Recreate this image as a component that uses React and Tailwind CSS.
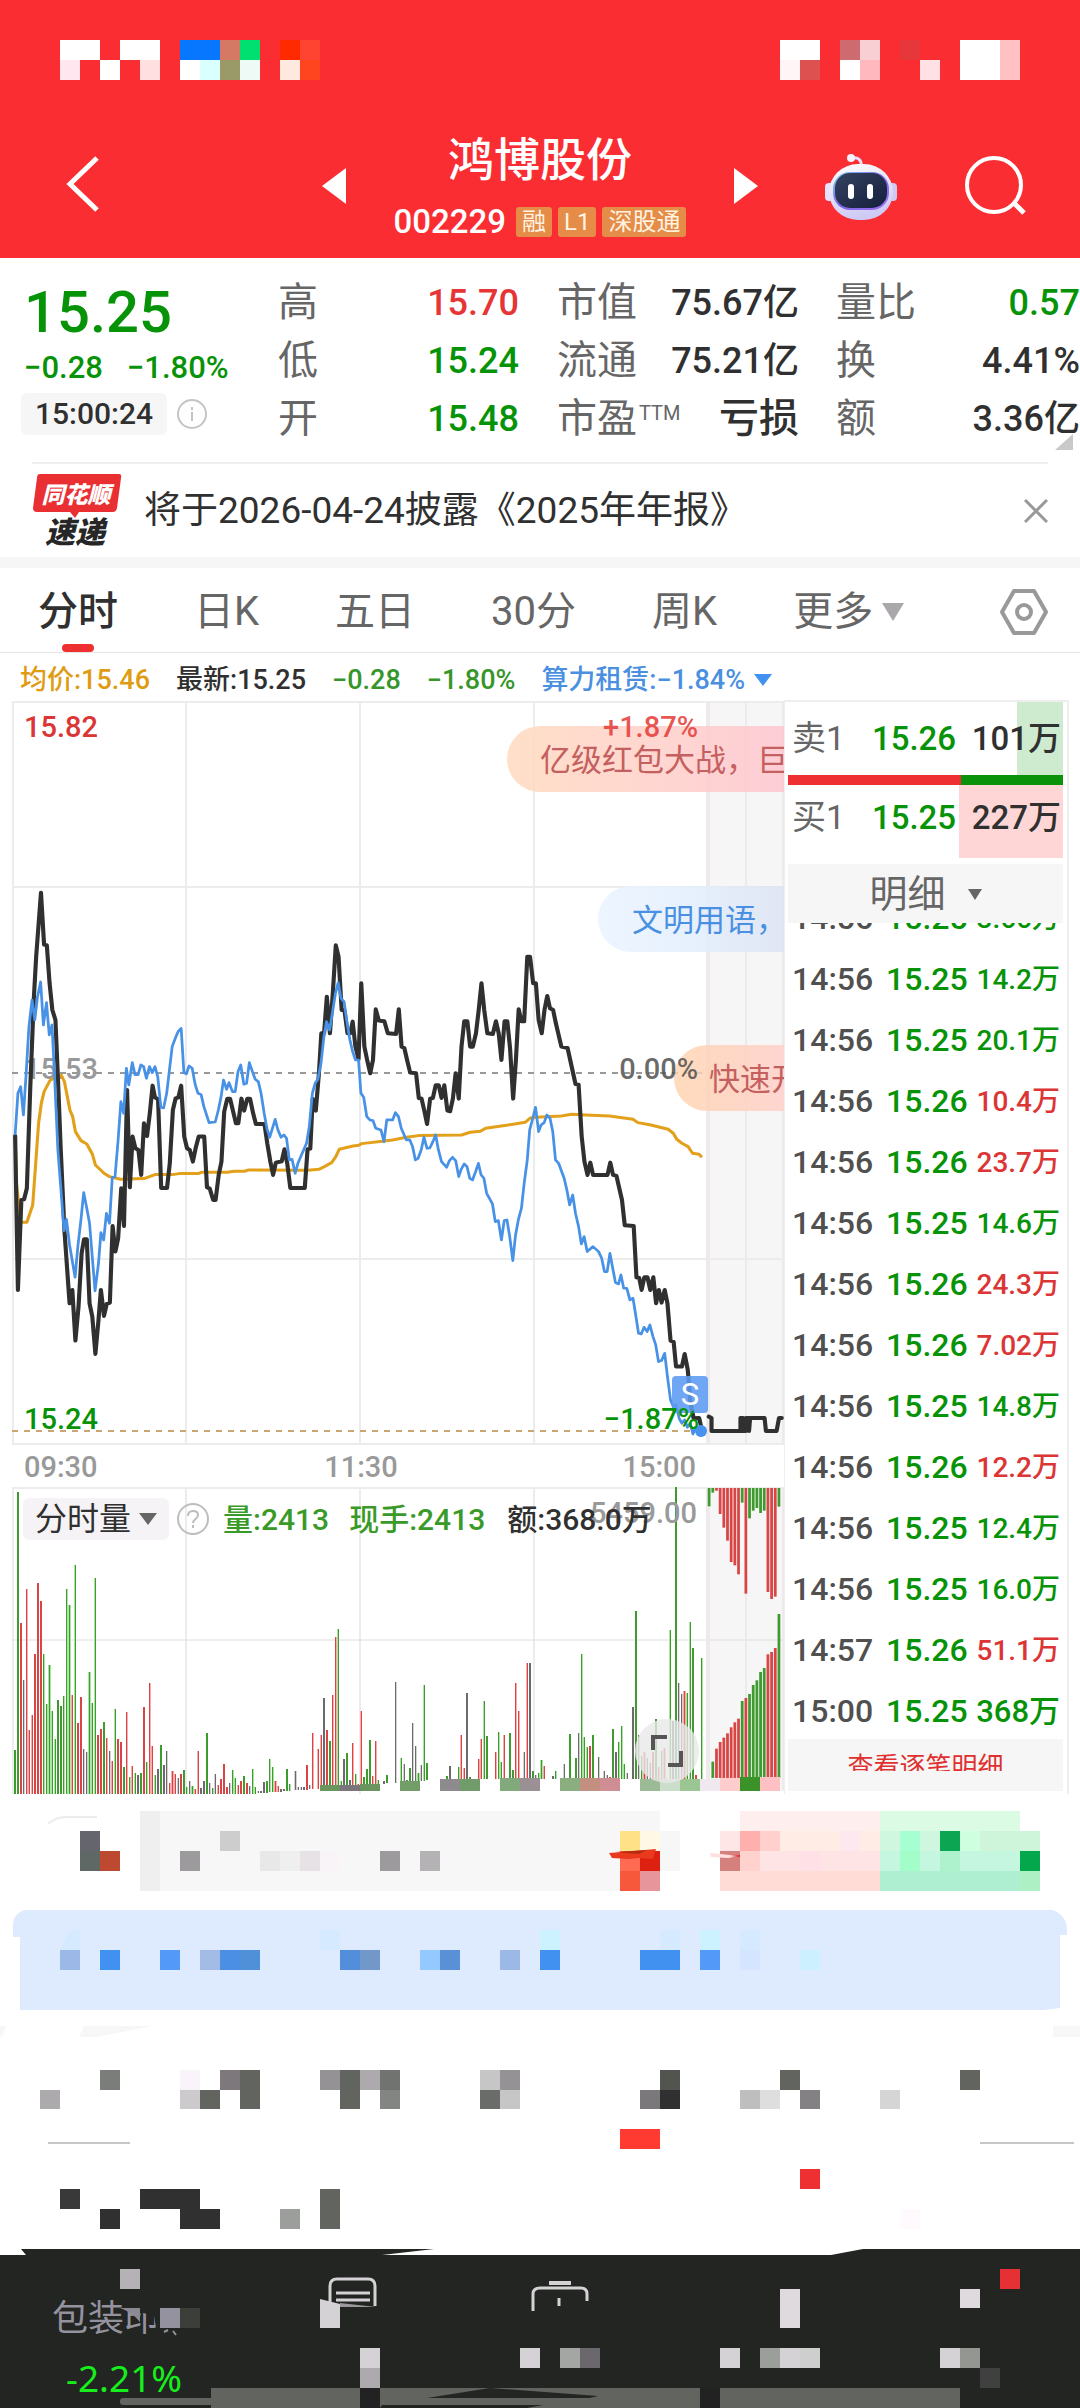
import React from "react";

const GREEN = "#079307";
const RED = "#dc3535";

const PRICE =
  "44,1338 52,1800 62,1530 70,1528 78,1495 88,1190 98,930 105,800 119,608 128,764 136,766 144,880 152,960 161,990 170,1210 176,1370 187,1620 202,1840 210,1800 219,1952 228,1850 237,1690 244,1648 252,1648 260,1840 268,1880 277,1992 286,1890 293,1800 302,1878 310,1842 319,1838 327,1608 335,1685 343,1645 352,1495 360,1608 369,1200 377,1492 385,1340 393,1375 402,1380 410,1455 418,1300 427,1338 435,1270 443,1187 450,1222 459,1228 468,1494 485,1494 493,1420 502,1260 510,1225 518,1222 526,1187 535,1340 543,1375 551,1380 560,1415 568,1375 577,1340 593,1340 601,1492 609,1496 619,1530 626,1530 635,1455 643,1415 651,1265 660,1226 668,1226 677,1265 685,1300 692,1300 701,1226 709,1262 718,1226 726,1226 735,1270 743,1302 768,1302 776,1360 785,1415 793,1455 801,1418 818,1414 826,1378 834,1420 843,1494 885,1494 893,1378 901,1376 908,1226 917,1262 926,1150 933,1030 941,1030 949,920 958,1030 967,900 975,766 983,800 992,960 1000,960 1009,1030 1017,1030 1024,995 1032,1070 1041,1108 1049,880 1058,1070 1066,1110 1075,1150 1083,1110 1091,958 1100,992 1116,994 1126,1030 1150,1032 1158,958 1166,1070 1174,1074 1182,1110 1191,1148 1208,1150 1216,1224 1224,1226 1232,1262 1240,1302 1249,1226 1257,1224 1265,1186 1274,1186 1282,1224 1290,1186 1299,1262 1307,1264 1315,1226 1323,1150 1332,1226 1340,1070 1348,994 1357,994 1365,1070 1373,1070 1382,1030 1390,960 1398,880 1406,960 1415,1030 1431,1032 1440,994 1448,1030 1456,1110 1465,994 1473,994 1481,1075 1490,1226 1498,1110 1506,958 1514,994 1522,994 1531,800 1539,800 1548,880 1556,880 1564,990 1573,1030 1581,960 1589,918 1597,955 1606,960 1614,1000 1630,1070 1648,1074 1671,1182 1680,1184 1689,1340 1697,1415 1706,1455 1714,1418 1722,1455 1764,1455 1772,1418 1780,1455 1790,1458 1806,1530 1814,1606 1840,1608 1848,1762 1856,1764 1863,1800 1871,1762 1880,1762 1888,1800 1897,1762 1905,1840 1913,1800 1921,1838 1930,1800 1938,1840 1947,1952 1956,1956 1963,2030 1980,2030 1988,1992 1997,2040 2005,2140 2014,2185 2030,2184 2039,2225";

const AUCTION =
  "2058,2180 2066,2184 2066,2223 2150,2223 2150,2184 2158,2184 2158,2223 2166,2223 2166,2184 2175,2184 2175,2223 2178,2184 2220,2184 2224,2223 2255,2223 2262,2184 2270,2184";

const SECTOR =
  "44,1335 52,1210 60,1190 68,1275 76,1150 84,1010 93,930 101,990 109,920 118,876 126,1005 135,938 143,1035 151,1005 158,1150 168,1380 177,1500 186,1622 193,1588 202,1665 218,1762 226,1670 235,1590 243,1508 252,1555 260,1600 276,1803 286,1720 293,1628 301,1650 309,1570 318,1600 326,1462 334,1460 343,1350 351,1235 359,1270 367,1135 374,1185 384,1118 392,1154 401,1154 409,1125 417,1130 425,1165 434,1130 442,1148 450,1130 458,1160 467,1252 475,1254 484,1210 492,1140 500,1070 509,1045 517,1025 526,1015 534,1148 541,1152 549,1128 558,1135 567,1185 575,1210 584,1214 592,1250 607,1298 625,1296 634,1260 642,1220 649,1170 658,1198 665,1178 675,1205 683,1205 691,1145 699,1125 708,1183 716,1180 724,1118 733,1145 741,1168 750,1175 758,1210 767,1270 775,1315 783,1342 799,1288 807,1320 816,1342 824,1335 832,1345 840,1410 848,1408 857,1450 865,1420 890,1360 898,1310 907,1210 915,1180 923,1168 932,1120 940,1045 948,995 957,1020 965,970 974,910 982,878 990,925 999,935 1008,1000 1016,1050 1024,1085 1032,1110 1041,1110 1048,1210 1056,1222 1065,1280 1074,1290 1083,1292 1091,1315 1106,1320 1115,1355 1123,1290 1140,1290 1148,1268 1157,1280 1165,1315 1180,1350 1190,1350 1198,1370 1206,1410 1214,1405 1223,1380 1231,1342 1240,1375 1248,1374 1257,1355 1265,1335 1273,1380 1282,1415 1297,1432 1305,1412 1314,1402 1323,1412 1332,1460 1339,1438 1348,1422 1356,1430 1364,1465 1372,1470 1381,1445 1389,1420 1397,1455 1405,1465 1413,1510 1430,1542 1438,1595 1447,1592 1456,1650 1464,1592 1472,1590 1480,1640 1489,1712 1497,1635 1505,1590 1514,1555 1522,1480 1531,1410 1538,1320 1547,1285 1555,1252 1564,1325 1571,1305 1580,1298 1588,1275 1597,1285 1605,1325 1613,1410 1622,1420 1638,1465 1646,1500 1654,1545 1663,1515 1671,1570 1680,1610 1688,1662 1696,1640 1705,1685 1722,1670 1738,1685 1747,1705 1755,1745 1763,1745 1771,1690 1787,1778 1796,1782 1803,1755 1811,1795 1820,1795 1829,1830 1838,1825 1845,1870 1854,1930 1862,1932 1870,1912 1879,1925 1887,1905 1896,1940 1904,1965 1912,2015 1921,2012 1930,1990 1938,2060 1947,2130 1955,2150 1963,2145 1972,2185 1980,2200 1988,2190 1996,2212 2004,2200 2012,2232 2020,2212 2036,2240";

const AVERAGE =
  "44,1338 48,1480 60,1597 78,1597 95,1545 103,1430 112,1300 120,1240 128,1205 145,1172 165,1158 178,1156 187,1175 203,1260 211,1280 219,1325 235,1352 252,1362 268,1392 277,1425 302,1450 318,1460 350,1468 418,1466 450,1454 500,1454 520,1451 575,1451 585,1447 660,1447 680,1444 710,1444 722,1440 895,1441 926,1438 942,1430 963,1418 975,1400 985,1378 1025,1368 1042,1366 1050,1361 1110,1354 1140,1350 1180,1342 1215,1337 1340,1335 1365,1327 1395,1324 1410,1315 1490,1303 1525,1297 1540,1284 1568,1281 1630,1278 1660,1273 1700,1275 1770,1278 1838,1288 1852,1298 1890,1305 1940,1318 1955,1330 1965,1348 1980,1360 1998,1370 2011,1390 2030,1393 2038,1402";

/* One entry per minute: colour key followed by the bar's top; "-" is an empty minute. */
const VOLUME = (
  "g960 g187 r580 k750 r477 r900 r855 r673 r460 r514 g672 g822 g705 g843 g927 g810 g827 g798 g477 g526 r796 g405 r879 r801 k957 k965 g727 g819 g445 r915 r898 g875 r924 k964 r992 g838 r926 r935 g1010 r847 " +
  "g1040 r1007 g1030 k1035 g1030 r830 g995 r760 r948 g1035 k1018 g945 k1005 k964 r1060 r1022 r1033 k1043 r1032 g1020 g1072 k1052 g1067 r1077 r963 k1075 k1052 g909 k1060 g1075 k1031 r1065 r1048 r1002 r1070 k1060 g1020 g1045 r1065 r1052 " +
  "g1038 r1058 k1068 g1018 g1072 k1082 k1083 k1056 g1052 g988 g1010 r1053 r1067 k1077 k1078 g1017 g1062 - k1022 k1072 k1070 k1072 r1005 k1066 r908 - r958 r916 k803 r900 g934 r796 r621 g598 g1054 k986 g969 k1050 r938 g1031 " +
  "r1062 r842 g1040 g1017 g929 r1037 r933 g1050 - k1052 g1034 - - k757 - g984 k1003 g1050 g1013 k880 k949 g1028 k1004 g766 g1000 - - - - - - g1039 k1009 - - g1010 r916 r1014 k790 g1040 " +
  "- - r988 r928 g814 g919 - - r967 g907 g996 r914 - g909 g1020 r758 r843 - k967 r699 k699 g1022 k1034 g1030 g990 r1008 - - k1038 g1024 - - k1002 - g912 - g984 k909 g672 g920 " +
  "g952 r948 g916 - k980 - k1022 k1036 r1040 g897 k967 g936 g887 g1002 k1030 - k832 g543 k915 g978 r967 k984 k998 r965 g867 r1012 g962 r955 - g600 k873 g171 k760 k792 r784 g790 g576 g655 r1035 - g684"
).split(" ");

const HANGING =
  "g229 g188 r182 r252 r293 r332 r396 r406 r433 g218 r491 g265 g242 g234 g249 g242 r486 r507 r500 g230".split(" ");
const RISING =
  "- g995 r956 r936 r923 r910 r892 r877 r866 g813 r804 g792 g765 g751 g726 g714 r673 r666 r654 g552".split(" ");

const BAR = { g: "#3f9a30", r: "#d94444", k: "#6c6a6c" };
const HALO = { g: "#a9e4a0", r: "#f6adad", k: "#d4d0d4" };

const volumeFloor = (i) => (i < 82 ? 1092 : i < 150 ? 1092 - ((i - 82) * 45) / 68 : 1047);

const TRADES = [
  ["14:56", "15.25", "3.66万", "g"],
  ["14:56", "15.25", "14.2万", "g"],
  ["14:56", "15.25", "20.1万", "g"],
  ["14:56", "15.26", "10.4万", "r"],
  ["14:56", "15.26", "23.7万", "r"],
  ["14:56", "15.25", "14.6万", "g"],
  ["14:56", "15.26", "24.3万", "r"],
  ["14:56", "15.26", "7.02万", "r"],
  ["14:56", "15.25", "14.8万", "g"],
  ["14:56", "15.26", "12.2万", "r"],
  ["14:56", "15.25", "12.4万", "g"],
  ["14:56", "15.25", "16.0万", "g"],
  ["14:57", "15.26", "51.1万", "r"],
  ["15:00", "15.25", "368万", "g"],
];

/* cells: [x, y, width, height, colour] */
function Cells({ cells }) {
  return cells.map(([x, y, w, h, c], i) => (
    <rect key={i} x={x} y={y} width={w} height={h} fill={c} shapeRendering="crispEdges" />
  ));
}

const STATUS_LEFT = [
  [0, 0, 40, 20, "#fff"], [60, 0, 40, 20, "#fff"], [0, 20, 20, 20, "#ffe6ef"], [40, 20, 20, 20, "#fff"], [80, 20, 20, 20, "#ffdfdf"],
  [120, 0, 40, 20, "#0877ff"], [160, 0, 20, 20, "#d57964"], [180, 0, 20, 20, "#00e070"],
  [120, 20, 20, 20, "#fff"], [140, 20, 20, 20, "#d9ffff"], [160, 20, 20, 20, "#9a9a68"], [180, 20, 20, 20, "#edfaf5"],
  [220, 0, 20, 20, "#ff2a00"], [240, 0, 20, 20, "#ff4431"], [220, 20, 20, 20, "#ffe8dd"], [240, 20, 20, 20, "#ff4520"],
];
const STATUS_RIGHT = [
  [0, 0, 40, 20, "#fff"], [0, 20, 20, 20, "#fff5f7"], [20, 20, 20, 20, "#de5151"],
  [60, 0, 20, 20, "#cd6b70"], [80, 0, 20, 20, "#f8d0d4"], [60, 20, 20, 20, "#fff"], [80, 20, 20, 20, "#ffb8bd"],
  [120, 0, 20, 20, "#e6373a"], [140, 20, 20, 20, "#ffe1e5"], [180, 0, 40, 40, "#fff"], [220, 0, 20, 40, "#ffc1c4"],
];

const SEARCH_CELLS = [
  [80, 1831, 20, 20, "#65666d"], [80, 1851, 20, 20, "#5f6864"], [100, 1851, 20, 20, "#bd4930"],
  [140, 1811, 20, 80, "#efefef"], [160, 1811, 500, 80, "#f7f7f7"],
  [180, 1851, 20, 20, "#9c9a9d"], [220, 1831, 20, 20, "#cdcdcd"], [260, 1851, 20, 20, "#e8e8e8"], [280, 1851, 20, 20, "#efefef"],
  [300, 1851, 20, 20, "#e6e2e6"], [320, 1851, 20, 20, "#f8f4f8"], [380, 1851, 20, 20, "#9c9a9d"], [420, 1851, 20, 20, "#b4b2b5"],
  [620, 1831, 20, 20, "#ffe288"], [640, 1831, 20, 20, "#fff8e4"], [660, 1831, 20, 40, "#f7f7f7"],
  [620, 1851, 20, 20, "#ff6b52"], [640, 1851, 20, 20, "#dd2010"], [620, 1871, 20, 20, "#f7583b"], [640, 1871, 20, 20, "#e7949b"],
  [740, 1811, 140, 20, "#ffeeee"], [880, 1811, 140, 20, "#dcfbe4"],
  [720, 1831, 20, 20, "#ffe6e6"], [740, 1831, 20, 20, "#ffb0ad"], [760, 1831, 20, 20, "#ffd0cd"], [780, 1831, 100, 20, "#ffece4"],
  [840, 1831, 20, 20, "#fde8ef"], [880, 1831, 60, 20, "#cff6df"], [900, 1831, 20, 20, "#a5ffd2"], [940, 1831, 20, 20, "#0ca653"],
  [960, 1831, 20, 20, "#ceffdf"], [980, 1831, 60, 20, "#cef5da"],
  [720, 1851, 20, 20, "#d4817d"], [740, 1851, 20, 20, "#ffd2cd"], [760, 1851, 120, 20, "#ffe4e6"], [800, 1851, 20, 20, "#ffe0e6"],
  [880, 1851, 140, 20, "#c5f6df"], [900, 1851, 20, 20, "#a3fdc9"], [940, 1851, 20, 20, "#aef2cd"], [1020, 1851, 20, 20, "#04a74b"],
  [720, 1871, 160, 20, "#ffdcd6"], [880, 1871, 140, 20, "#adefd0"], [1020, 1871, 20, 20, "#adf0c4"],
];

const BANNER_CELLS = [
  [320, 1930, 20, 20, "#d5eaff"], [540, 1930, 20, 20, "#ccf1ff"], [660, 1930, 20, 20, "#d5eaff"], [700, 1930, 20, 20, "#ccf1ff"], [740, 1930, 20, 20, "#d5eaff"],
  [60, 1950, 20, 20, "#9cb8e6"], [100, 1950, 20, 20, "#4192f0"], [160, 1950, 20, 20, "#5299f8"], [200, 1950, 20, 20, "#a4bbe6"],
  [220, 1950, 20, 20, "#4a8fe4"], [240, 1950, 20, 20, "#5090d8"], [340, 1950, 20, 20, "#528eda"], [360, 1950, 20, 20, "#7298ca"],
  [420, 1950, 20, 20, "#94c9ff"], [440, 1950, 20, 20, "#5a90d6"], [500, 1950, 20, 20, "#9cb8e6"], [540, 1950, 20, 20, "#4192f0"],
  [640, 1950, 40, 20, "#4192f0"], [700, 1950, 20, 20, "#5299f8"], [740, 1950, 20, 20, "#d5e4ff"], [800, 1950, 20, 20, "#ccf0ff"],
];

const LIST_CELLS = [
  [100, 2070, 20, 20, "#7b7d7a"], [180, 2070, 20, 20, "#f9f4f9"], [220, 2070, 20, 20, "#7c787c"], [240, 2070, 20, 39, "#62645f"],
  [320, 2070, 20, 20, "#949294"], [340, 2070, 20, 39, "#62645f"], [360, 2070, 20, 20, "#acaaad"], [380, 2070, 20, 20, "#70736f"],
  [480, 2070, 20, 20, "#c6c6c6"], [500, 2070, 20, 20, "#949294"], [660, 2070, 20, 20, "#525450"], [780, 2070, 20, 20, "#62645f"], [960, 2070, 20, 20, "#62645f"],
  [40, 2090, 20, 19, "#acaaad"], [180, 2090, 20, 19, "#cdcacd"], [200, 2090, 20, 19, "#62645f"], [380, 2090, 20, 19, "#838583"],
  [480, 2090, 20, 19, "#6a6c69"], [500, 2090, 20, 19, "#c6c6c6"], [640, 2090, 20, 19, "#7b787b"], [660, 2090, 20, 19, "#303030"],
  [740, 2090, 20, 19, "#bebebe"], [760, 2090, 20, 19, "#dedede"], [800, 2090, 20, 19, "#838183"], [880, 2090, 20, 19, "#d5d5d5"],
  [48, 2142, 82, 2, "#c6c6c6"], [980, 2142, 94, 2, "#c6c6c6"],
  [620, 2129, 40, 20, "#ff3a31"], [800, 2169, 20, 20, "#ee3033"],
  [60, 2189, 20, 20, "#393939"], [140, 2189, 60, 20, "#303030"], [320, 2189, 20, 40, "#62645f"],
  [100, 2209, 20, 20, "#303030"], [180, 2209, 40, 20, "#303030"], [280, 2209, 20, 20, "#9c9e9b"], [900, 2209, 20, 20, "#fffafe"],
];

const FOOTER_CELLS = [
  [120, 2269, 20, 20, "#b4b2b5"], [1000, 2269, 20, 20, "#e63134"], [960, 2289, 20, 19, "#dedade"], [780, 2289, 20, 39, "#dedade"],
  [160, 2308, 20, 20, "#94929e"], [180, 2308, 20, 20, "#3c3e3a"],
  [360, 2348, 20, 20, "#d5d2d5"], [520, 2348, 20, 20, "#d5d2d5"], [560, 2348, 20, 20, "#a4a6a4"], [580, 2348, 20, 20, "#6a686c"],
  [720, 2348, 20, 20, "#d5d2d5"], [760, 2348, 20, 20, "#9c9e9b"], [780, 2348, 20, 20, "#d5d2d5"], [800, 2348, 20, 20, "#cdcecd"],
  [940, 2348, 20, 20, "#d5d2d5"], [960, 2348, 20, 20, "#949692"], [360, 2368, 20, 20, "#acaaad"], [980, 2368, 20, 20, "#414041"],
  [211, 2388, 749, 20, "#62645f"], [360, 2388, 20, 20, "#222222"], [700, 2388, 20, 20, "#222222"],
];

const VOLUME_CELLS = [
  [320, 1785, 20, 6, "#6b955f"], [340, 1785, 20, 6, "#7a767b"], [360, 1784, 20, 7, "#6b955f"], [400, 1781, 20, 10, "#729c68"],
  [440, 1779, 20, 12, "#8d8b8e"], [460, 1779, 20, 12, "#719b6b"], [500, 1778, 20, 13, "#82a97c"], [520, 1778, 20, 13, "#9b9093"],
  [560, 1778, 20, 13, "#8aae80"], [580, 1778, 20, 13, "#c38f80"], [600, 1778, 20, 13, "#cf8e94"], [640, 1779, 20, 12, "#9dba96"],
  [660, 1779, 20, 12, "#cbddcb"], [680, 1779, 20, 12, "#9cc594"], [700, 1779, 20, 12, "#efe8ee"], [720, 1778, 20, 13, "#ffcdcd"],
  [740, 1777, 20, 14, "#3a9229"], [760, 1777, 20, 14, "#ffc0c3"],
];

function Robot() {
  return (
    <svg className="h-[68px] w-[72px]" viewBox="0 0 72 68" aria-hidden="true">
      <defs>
        <linearGradient id="shell" x1="0" y1="0" x2="0.3" y2="1">
          <stop offset="0" stopColor="#ffffff" />
          <stop offset="1" stopColor="#cfcaf5" />
        </linearGradient>
        <linearGradient id="visor" x1="0" y1="0" x2="1" y2="1">
          <stop offset="0" stopColor="#35435f" />
          <stop offset="1" stopColor="#151e3e" />
        </linearGradient>
        <linearGradient id="rim" x1="0" y1="0" x2="1" y2="1">
          <stop offset="0" stopColor="#7fd0ee" />
          <stop offset="0.5" stopColor="#7a66e8" />
          <stop offset="1" stopColor="#a070f0" />
        </linearGradient>
      </defs>
      <path d="M36 14c1-6-3-9-9-8" fill="none" stroke="#e3defa" strokeWidth="3" strokeLinecap="round" />
      <circle cx="26" cy="6" r="4" fill="#f6f2ff" />
      <rect x="0" y="31" width="9" height="18" rx="4" fill="#e6e2fb" />
      <rect x="63" y="31" width="9" height="18" rx="4" fill="#cfc9f3" />
      <rect x="4" y="12" width="64" height="56" rx="29" fill="url(#shell)" />
      <rect x="8" y="20" width="56" height="38" rx="17" fill="url(#rim)" />
      <rect x="10" y="21" width="52" height="35" rx="15" fill="url(#visor)" />
      <rect x="23" y="32" width="6" height="15" rx="3" fill="#fff" />
      <rect x="42" y="32" width="6" height="15" rx="3" fill="#fff" />
    </svg>
  );
}

function Header() {
  return (
    <header className="bg-[#fa2d32] text-white">
      <div className="flex h-[114px] justify-between px-[60px] pt-10">
        <svg className="h-10 w-[260px]" viewBox="0 0 260 40" aria-hidden="true"><Cells cells={STATUS_LEFT} /></svg>
        <svg className="h-10 w-[240px]" viewBox="0 0 240 40" aria-hidden="true"><Cells cells={STATUS_RIGHT} /></svg>
      </div>
      <div className="grid h-[144px] grid-cols-[300px_1fr_300px] items-center">
        <button type="button" aria-label="返回" className="ml-16 w-9">
          <svg className="h-[60px] w-9" viewBox="0 0 36 60" fill="none" stroke="#fff" strokeWidth="5"><path d="M33 2 6 28l27 26" /></svg>
        </button>
        <div className="flex items-center justify-between px-[22px]">
          <button type="button" aria-label="上一只">
            <svg className="h-9 w-6" viewBox="0 0 24 36" fill="#fff"><path d="M0 18 24 0v36z" /></svg>
          </button>
          <div className="flex flex-col items-center">
            <h1 className="text-[46px] leading-[64px] font-medium">鸿博股份</h1>
            <div className="mt-2 flex h-11 items-center gap-[6px]">
              <span className="mr-1 text-[33px] leading-[44px] font-medium">002229</span>
              {["融", "L1", "深股通"].map((t) => (
                <span key={t} className="h-[30px] rounded-[3px] bg-[#e58c49] px-[6px] text-[24px] leading-[30px] text-[#fff3e0]">{t}</span>
              ))}
            </div>
          </div>
          <button type="button" aria-label="下一只">
            <svg className="h-9 w-6" viewBox="0 0 24 36" fill="#fff"><path d="M24 18 0 0v36z" /></svg>
          </button>
        </div>
        <div className="flex items-center gap-[66px] pl-[45px]">
          <button type="button" aria-label="助手"><Robot /></button>
          <button type="button" aria-label="搜索">
            <svg className="h-[60px] w-16" viewBox="0 0 64 60" fill="none" stroke="#fff" strokeWidth="4">
              <circle cx="31" cy="29" r="27" />
              <path d="m51 47 10 10" strokeWidth="5" />
            </svg>
          </button>
        </div>
      </div>
    </header>
  );
}

const STATS = [
  { pad: "pr-5", rows: [["高", "15.70", "text-[#e63535]"], ["低", "15.24", "text-[#079307]"], ["开", "15.48", "text-[#079307]"]] },
  { pad: "pr-[19px]", rows: [["市值", "75.67亿", ""], ["流通", "75.21亿", ""], ["市盈", "亏损", ""]] },
  { pad: "", rows: [["量比", "0.57", "text-[#079307]"], ["换", "4.41%", ""], ["额", "3.36亿", ""]] },
];

function Quote() {
  return (
    <section className="relative grid h-[204px] grid-cols-[260fr_279fr_279fr_262fr] pt-4 text-[#303030]">
      <div className="pt-[2px] pl-6 text-[#079307]">
        <div className="text-[58px] leading-[72px] font-medium">15.25</div>
        <div className="mt-[2px] flex gap-6 text-[31px] leading-9 font-medium whitespace-nowrap"><span>−0.28</span><span>−1.80%</span></div>
        <div className="mt-[7px] -ml-[3px] flex items-center gap-[10px]">
          <time className="h-[42px] rounded-md bg-[#f6f6f6] px-[14px] text-[30px] leading-[42px] font-medium text-[#303030]">15:00:24</time>
          <button type="button" aria-label="说明">
            <svg className="h-[30px] w-[30px]" viewBox="0 0 30 30" fill="none" stroke="#c4c4c4" strokeWidth="2">
              <circle cx="15" cy="15" r="14" /><path d="M15 13v9M15 8v3" />
            </svg>
          </button>
        </div>
      </div>
      {STATS.map((col, c) => (
        <dl key={c} className={`pl-[18px] ${col.pad}`}>
          {col.rows.map(([k, v, tone]) => (
            <div key={k} className="flex h-[58px] items-center justify-between whitespace-nowrap">
              <dt className="flex text-[40px] leading-[58px] text-[#666]">
                {k}
                {k === "市盈" && <sup className="top-0 ml-[2px] h-7 text-[20px] leading-[46px]">TTM</sup>}
              </dt>
              <dd className={`leading-[58px] font-medium ${v === "亏损" ? "text-[40px]" : "text-[36px]"} ${tone}`}>{v}</dd>
            </div>
          ))}
        </dl>
      ))}
      <svg className="absolute right-[7px] bottom-3 h-4 w-[18px]" viewBox="0 0 18 16" aria-hidden="true"><path d="M18 0v16H0z" fill="#c9c9c9" /></svg>
    </section>
  );
}

function Notice() {
  return (
    <section className="mx-8 flex h-[95px] items-center border-t-2 border-[#efefef]">
      <svg className="h-[76px] w-[90px] shrink-0" viewBox="0 0 90 76" role="img" aria-label="同花顺速递">
        <path d="M8 1h79q3 0 2 4l-4 30q-1 4-4 4H47l-4 6-5-6H5q-4 0-4-4L5 5q0-4 3-4z" fill="#ea2f33" />
        <text x="44" y="30" fontSize="23" fontWeight="900" fontStyle="italic" fill="#fff" textAnchor="middle">同花顺</text>
        <text x="43" y="70" fontSize="30" fontWeight="900" fontStyle="italic" fill="#262626" textAnchor="middle">速递</text>
      </svg>
      <p className="ml-[22px] grow text-[37px] leading-[44px] whitespace-nowrap text-[#303030]">将于2026-04-24披露《2025年年报》</p>
      <button type="button" aria-label="关闭">
        <svg className="h-6 w-6" viewBox="0 0 24 24" stroke="#999" strokeWidth="3"><path d="m1 1 22 22M23 1 1 23" /></svg>
      </button>
    </section>
  );
}

function Tabs() {
  return (
    <nav className="flex h-[85px] items-center gap-[76px] border-b border-[#e6e6e6] pt-1 pr-8 pl-[38px] text-[40px] whitespace-nowrap text-[#666]">
      <button type="button" className="relative h-20 font-medium text-[#303030]">
        分时
        <span className="absolute bottom-0 left-6 h-2 w-8 rounded-full bg-[#ee3031]" />
      </button>
      {["日K", "五日", "30分", "周K"].map((t) => (
        <button type="button" key={t}>{t}</button>
      ))}
      <button type="button" className="flex items-center gap-2">
        更多
        <svg className="h-[18px] w-6" viewBox="0 0 24 18" fill="#aaa8aa"><path d="M1 0h22L12 18z" /></svg>
      </button>
      <button type="button" aria-label="设置" className="ml-auto">
        <svg className="h-[46px] w-12" viewBox="0 0 48 46" fill="none" stroke="#999" strokeWidth="4" strokeLinejoin="round">
          <path d="M14 2h20l12 21-12 21H14L2 23z" /><circle cx="24" cy="23" r="7" />
        </svg>
      </button>
    </nav>
  );
}

function InfoLine() {
  return (
    <div className="flex h-[47px] items-center gap-[26px] pt-[6px] pl-5 text-[27px] leading-9 font-medium whitespace-nowrap">
      <span className="text-[#df9c12]">均价:15.46</span>
      <span className="text-[#303030]">最新:15.25</span>
      <span className="text-[#36962a]">−0.28</span>
      <span className="text-[#36962a]">−1.80%</span>
      <button type="button" className="flex items-center gap-[9px] text-[#4a8fe0]">
        算力租赁:−1.84%
        <svg className="h-3 w-[18px]" viewBox="0 0 18 12" fill="#4192f0"><path d="M0 0h18L9 12z" /></svg>
      </button>
    </div>
  );
}

function Bubble({ x, y, fill, color, children, textX }) {
  return (
    <g>
      <path d={`M784 ${y}H${x + 33}a33 33 0 0 0 0 66H784z`} fill={fill} />
      <text x={textX} y={y + 45} fontSize="31" fill={color}>{children}</text>
    </g>
  );
}

function Chart() {
  return (
    <div className="relative">
      <svg className="block w-full" viewBox="0 700 784 1094" role="img" aria-label="分时走势与成交量">
        <defs>
          <linearGradient id="warm"><stop offset="0" stopColor="#ffdcc2" stopOpacity="0.9" /><stop offset="1" stopColor="#ffc6d0" stopOpacity="0.85" /></linearGradient>
          <linearGradient id="warm2"><stop offset="0" stopColor="#ffd2ac" stopOpacity="0.8" /><stop offset="1" stopColor="#ffd2cc" stopOpacity="0.9" /></linearGradient>
          <linearGradient id="cool"><stop offset="0" stopColor="#ebf5ff" stopOpacity="0.9" /><stop offset="0.5" stopColor="#e4effd" stopOpacity="0.9" /><stop offset="1" stopColor="#dbe2f4" stopOpacity="0.8" /></linearGradient>
        </defs>

        <rect x="706" y="702" width="78" height="742" fill="#f6f6f6" />
        <rect x="706" y="1488" width="78" height="306" fill="#f6f6f6" />
        <g stroke="#ececec" strokeWidth="2">
          <path d="M12 702H784M12 887H784M12 1259H784M12 1444H784M12 1488H784" />
          {[13, 186, 360, 534].map((x) => <path key={x} d={`M${x} 702V1444M${x} 1488V1794`} />)}
          <path d="M12 1640H784" stroke="#dedede" strokeWidth="1" />
        </g>
        <g stroke="#eeeaec"><path d="M708 702V1444M708 1488V1790" strokeWidth="4" /><path d="M746 702V1444M783 702V1444M746 1488V1790M783 1488V1790" strokeWidth="2" /></g>

        <path d="M12 1073H702" stroke="#999" strokeWidth="2" strokeDasharray="6 6" />
        <path d="M12 1431H702" stroke="#c9a672" strokeWidth="2" strokeDasharray="6 6" />

        <text x="24" y="1079" fontSize="29" fontWeight="500" fill="#999">15.53</text>

        <g transform="translate(0 690) scale(0.3444 0.3333)" fill="none" strokeLinejoin="round">
          <polyline points={AVERAGE} stroke="#e2a01b" strokeWidth="9" />
          <polyline points={PRICE} stroke="#303030" strokeWidth="12" strokeLinecap="round" />
          <polyline points={AUCTION} stroke="#303030" strokeWidth="12" strokeLinecap="round" />
          <polyline points={SECTOR} stroke="#4791e6" strokeWidth="8" />
        </g>

        <circle cx="701" cy="1431" r="6" fill="#4791ef" />
        <rect x="672" y="1376" width="36" height="37" rx="4" fill="#5c9bf3" fillOpacity="0.88" />
        <text x="690" y="1405" fontSize="31" fill="#fff" textAnchor="middle">S</text>

        <Bubble x={507} y={726} fill="url(#warm)" color="#c4605f" textX={540}>亿级红包大战，巨</Bubble>
        <Bubble x={598} y={886} fill="url(#cool)" color="#4a90e2" textX={632}>文明用语，</Bubble>
        <Bubble x={674} y={1045} fill="url(#warm2)" color="#c4605f" textX={709}>快速开</Bubble>

        <g fontSize="29" fontWeight="500">
          <text x="24" y="737" fill={RED}>15.82</text>
          <text x="698" y="737" fill="#e53f3c" fillOpacity="0.9" textAnchor="end">+1.87%</text>
          <text x="698" y="1079" fill="#505050" fillOpacity="0.85" textAnchor="end">0.00%</text>
          <text x="24" y="1429" fill={GREEN}>15.24</text>
          <text x="699" y="1429" fill={GREEN} textAnchor="end">−1.87%</text>
        </g>

        <g fontSize="29" fontWeight="500" fill="#999">
          <text x="24" y="1477">09:30</text>
          <text x="361" y="1477" textAnchor="middle">11:30</text>
          <text x="696" y="1477" textAnchor="end">15:00</text>
        </g>

        <g transform="translate(0 1430) scale(0.3444 0.3333)">
          <g shapeRendering="crispEdges">
            {VOLUME.map((v, i) => {
              if (v === "-") return null;
              const top = Number(v.slice(1));
              const h = Math.max(3, volumeFloor(i) - top);
              const x = 44 + i * 8.306;
              return (
                <g key={i}>
                  <rect x={x - 3} y={top} width="6" height={h} fill={HALO[v[0]]} />
                  <rect x={x - 2} y={top} width="4" height={h} fill={BAR[v[0]]} />
                </g>
              );
            })}
          </g>
          {HANGING.map((v, i) => (
            <rect key={i} x={2055 + i * 10.67} y="174" width="8" height={Number(v.slice(1)) - 174} fill={BAR[v[0]]} />
          ))}
          {RISING.map((v, i) =>
            v === "-" ? null : (
              <rect key={i} x={2055 + i * 10.67} y={Number(v.slice(1))} width="8" height={1044 - Number(v.slice(1))} fill={BAR[v[0]]} />
            )
          )}
        </g>
        <rect x="380" y="1791" width="404" height="3" fill="#fff" />
        <Cells cells={VOLUME_CELLS} />
        <text x="697" y="1523" fontSize="29" fontWeight="500" fill="#999" textAnchor="end">5459.00</text>
      </svg>

      <div className="absolute bottom-[254px] left-[23px] flex h-[42px] items-center text-[30px] whitespace-nowrap">
        <button type="button" className="flex h-[42px] items-center gap-2 rounded-md bg-[#f6f3f7] px-3 text-[32px] leading-[42px] text-[#303030]">
          分时量
          <svg className="h-3 w-[18px]" viewBox="0 0 18 12" fill="#666"><path d="M0 0h18L9 12z" /></svg>
        </button>
        <button type="button" aria-label="帮助" className="ml-2">
          <svg className="h-8 w-8" viewBox="0 0 32 32" fill="none" stroke="#bdbdbd" strokeWidth="2">
            <circle cx="16" cy="16" r="15" />
            <path d="M11 13q0-5 5-5t5 4c0 4-5 4-5 8M16 22v3" />
          </svg>
        </button>
        <span className="ml-[14px] font-medium text-[#3a9a28]">量:2413</span>
        <span className="ml-5 font-medium text-[#3a9a28]">现手:2413</span>
        <span className="ml-[22px] font-medium text-[#303030]">额:368.0万</span>
      </div>
      <button type="button" aria-label="展开" className="absolute right-[85px] bottom-[11px] flex h-16 w-16 items-center justify-center rounded-full bg-[#e8e8e8]/80">
        <svg className="h-[34px] w-[34px]" viewBox="0 0 34 34" fill="none" stroke="#555" strokeWidth="4"><path d="M3 16V3h14M31 17v14H18" /></svg>
      </button>
    </div>
  );
}

function OrderBook() {
  return (
    <aside className="flex flex-col border-t-2 border-r-2 border-l border-[#eee] pr-1 pl-[3px]">
      <div className="grid h-[73px] grid-cols-[82fr_94fr_100fr] items-center bg-[linear-gradient(to_left,#cfebcf_46px,transparent_46px)] pr-[2px] pl-1 text-[33px] font-medium whitespace-nowrap">
        <span className="text-[34px] font-normal text-[#666]">卖1</span>
        <span className="text-[#079307]">15.26</span>
        <span className="text-right text-[#303030]">101万</span>
      </div>
      <div className="flex h-[10px]">
        <div className="w-[63%] bg-[#ee3033]" />
        <div className="grow bg-[#0a930a]" />
      </div>
      <div className="grid h-[73px] grid-cols-[82fr_94fr_100fr] items-center bg-[linear-gradient(to_left,#ffd6d6_104px,transparent_104px)] pr-[2px] pb-2 pl-1 text-[33px] font-medium whitespace-nowrap">
        <span className="text-[34px] font-normal text-[#666]">买1</span>
        <span className="text-[#079307]">15.25</span>
        <span className="text-right text-[#303030]">227万</span>
      </div>
      <button type="button" className="mt-[6px] flex h-[59px] items-center justify-center gap-[22px] bg-[#f6f6f6] pt-[2px] text-[38px] text-[#666]">
        明细
        <svg className="h-[11px] w-[14px]" viewBox="0 0 14 11" fill="#666"><path d="M0 0h14L7 11z" /></svg>
      </button>
      <div className="flex min-h-0 flex-[1_1_0px] flex-col justify-end overflow-hidden">
        <table className="w-full table-fixed font-medium">
          <tbody>
            {TRADES.map(([t, p, a, k], i) => (
              <tr key={i} className="h-[61px] whitespace-nowrap">
                <td className="w-[98px] p-0 pt-[6px] pl-1 text-[32px] leading-[55px] text-[#505050]">{t}</td>
                <td className="w-[82px] p-0 pt-[6px] text-[32px] leading-[55px] text-[#079307]">{p}</td>
                <td className={`p-0 pt-[6px] pr-[3px] text-right leading-[55px] ${i === TRADES.length - 1 ? "text-[31px]" : "text-[28px]"} ${k === "g" ? "text-[#079307]" : "text-[#dc3535]"}`}>{a}</td>
              </tr>
            ))}
          </tbody>
        </table>
      </div>
      <div className="mb-[3px] h-[52px] bg-[#f6f6f6] pt-3">
        <button type="button" className="mx-auto block h-5 overflow-hidden text-[26px] leading-8 text-[#e03030]">查看逐笔明细</button>
      </div>
    </aside>
  );
}

function Bottom() {
  return (
    <svg className="block w-full" viewBox="0 1794 1080 614" role="img" aria-label="底部导航">
      <Cells cells={SEARCH_CELLS} />
      <path d="M48 1824q8-7 18-7h31" fill="none" stroke="#ececec" strokeWidth="2" />
      <path d="M609 1853l14-1 33-3-3 10-14-1-10 1-17-1z" fill="#ea3a1e" />
      <path d="M615 1852l32-2-8 4z" fill="#b52a10" />
      <path d="M710 1853l30 3-12 2-17-1z" fill="#ffe0de" />
      <path d="M730 1856l10-1v2z" fill="#e0302c" />

      <path d="M24 1910H1053q14 6 14 20v5h-7v73l-16 2H20v-73h-7v-12q0-11 11-15z" fill="#deeafe" />
      <path d="M70 1930h10v20H60z" fill="#d5eaff" />
      <Cells cells={BANNER_CELLS} />

      <path d="M0 2026h6l-4 11H0zM84 2026h69l-56 11H79zM1053 2026h27v11h-27z" fill="#f7f7f7" />
      <Cells cells={LIST_CELLS} />

      <path d="M0 2255h26l-5-6H434l-52 6H831l32-6h217v159H0z" fill="#222522" />
      <text x="52" y="2331" fontSize="36" fill="#94929e">包装印</text>
      <path d="M122 2300h60v28h-26l-2-12-14-4-8-4h-10z" fill="#222522" />
      <path d="M120 2308h20v14q-8-10-20-14z" fill="#8b8994" />
      <path d="M164 2332l4-2M173 2331l3 4" stroke="#94929e" strokeWidth="2" />
      <text x="66" y="2392" fontSize="37" fill="#16ef1b" fontFamily="'Noto Sans', sans-serif">-2.21%</text>

      <g fill="none" stroke="#d5d2d6" strokeWidth="3">
        <path d="M330 2303v-17q0-7 7-7h31q7 0 7 7v20" />
        <path d="M336 2293h34M336 2300h34" />
        <path d="M549 2283h22" strokeWidth="4" />
        <path d="M533 2311v-17q0-6 7-6h41q6 0 6 6v7M559 2298v8" />
      </g>
      <path d="M340 2303l36 4h-36z" fill="#9a989b" />
      <path d="M320 2299l20 5v24h-20z" fill="#d5d2d6" />
      <rect x="120" y="2398" width="100" height="7" rx="3" fill="#62645f" />
      <Cells cells={FOOTER_CELLS} />
      <path d="M427 2398l63-10 108 8-8 2zM382 2405h161l-16 3H380z" fill="#222522" />
    </svg>
  );
}

export default function App() {
  return (
    <main className="w-full overflow-hidden bg-white font-['Roboto','Noto_Sans_CJK_SC',sans-serif]" lang="zh-CN">
      <Header />
      <Quote />
      <Notice />
      <div className="h-[11px] bg-[#f6f6f6]" />
      <Tabs />
      <InfoLine />
      <div className="grid grid-cols-[784fr_285fr_11fr]">
        <Chart />
        <OrderBook />
      </div>
      <Bottom />
    </main>
  );
}
